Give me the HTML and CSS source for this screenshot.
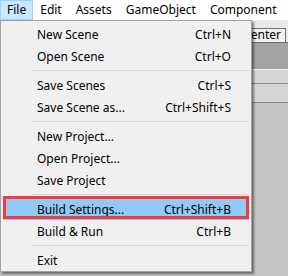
FILE: index.html
```html
<!DOCTYPE html>
<html lang="en">
<head>
  <meta charset="UTF-8" />
  <title>File Menu</title>
  <link rel="stylesheet" href="styles.css">
</head>
<body>
  <div class="window">
    <nav class="menubar">
      <span class="menu-title open">File</span>
      <span class="menu-title">Edit</span>
      <span class="menu-title">Assets</span>
      <span class="menu-title">GameObject</span>
      <span class="menu-title">Component</span>
    </nav>

    <div class="workspace">
      <div class="toolbar">
        <span class="tool-btn">Center</span>
      </div>
      <div class="toolbar-fill"></div>
      <div class="tab-row"></div>
      <div class="tab-row tall"></div>
      <div class="scene"></div>
    </div>

    <ul class="dropdown">
      <li class="item"><span>New Scene</span><span>Ctrl+N</span></li>
      <li class="item"><span>Open Scene</span><span>Ctrl+O</span></li>
      <li class="sep"></li>
      <li class="item"><span>Save Scenes</span><span>Ctrl+S</span></li>
      <li class="item"><span>Save Scene as...</span><span>Ctrl+Shift+S</span></li>
      <li class="sep"></li>
      <li class="item"><span>New Project...</span></li>
      <li class="item"><span>Open Project...</span></li>
      <li class="item"><span>Save Project</span></li>
      <li class="sep"></li>
      <li class="item active"><span>Build Settings...</span><span>Ctrl+Shift+B</span></li>
      <li class="item"><span>Build &amp; Run</span><span>Ctrl+B</span></li>
      <li class="sep"></li>
      <li class="item"><span>Exit</span></li>
    </ul>
  </div>
</body>
</html>
```

FILE: styles.css
```css
* {
  margin: 0;
  padding: 0;
  box-sizing: border-box;
}

body {
  font-family: "Noto Sans", "Segoe UI", sans-serif;
  font-size: 12px;
  color: #000;
  background: #c3c3c3;
}

.window {
  position: relative;
  width: 288px;
  height: 276px;
  overflow: hidden;
}

.menubar {
  display: flex;
  height: 20px;
  background: #fff;
  white-space: nowrap;
}

.menu-title {
  display: flex;
  align-items: center;
  padding: 0 6px;
  border: 1px solid transparent;
  line-height: 18px;
}

.menu-title.open {
  background: #cce8ff;
  border-color: #99d1ff;
}

.workspace {
  display: flex;
  flex-direction: column;
}

.toolbar {
  display: flex;
  justify-content: flex-end;
  height: 22px;
  padding: 8px 2px 0 0;
  background: #e9e9e9;
}

.tool-btn {
  height: 14px;
  padding: 0 4px 0 6px;
  line-height: 12px;
  background: #f0f0f0;
  border: 1px solid #6f6f6f;
  border-bottom: none;
}

.toolbar-fill {
  height: 27px;
  background: #a3a3a3;
  border-top: 1px solid #6f6f6f;
}

.tab-row {
  height: 15px;
  background: #d6d6d6;
  border-top: 1px solid #f4f4f4;
  border-bottom: 1px solid #8c8c8c;
}

.tab-row.tall {
  height: 19px;
  border-top: none;
}

.scene {
  flex: 1;
  background: #c3c3c3;
}

.dropdown {
  position: absolute;
  top: 20px;
  left: 0;
  width: 252px;
  padding: 2px 2px 0;
  list-style: none;
  background: #f0f0f0;
  border: 1px solid #a0a0a0;
  box-shadow: 2px 2px 2px rgba(0, 0, 0, 0.45);
}

.item {
  position: relative;
  display: flex;
  justify-content: space-between;
  align-items: center;
  height: 22px;
  padding: 0 18px 0 34px;
  white-space: nowrap;
}

.item.active {
  background: #91c9f7;
}

.item.active::after {
  content: "";
  position: absolute;
  top: -2px;
  bottom: 1px;
  left: 0;
  right: 0;
  border: 3px solid #f23c3c;
}

.sep {
  height: 7px;
  margin-left: 29px;
  padding-top: 3px;
}

.sep::before {
  content: "";
  display: block;
  height: 1px;
  background: #d7d7d7;
}
```
